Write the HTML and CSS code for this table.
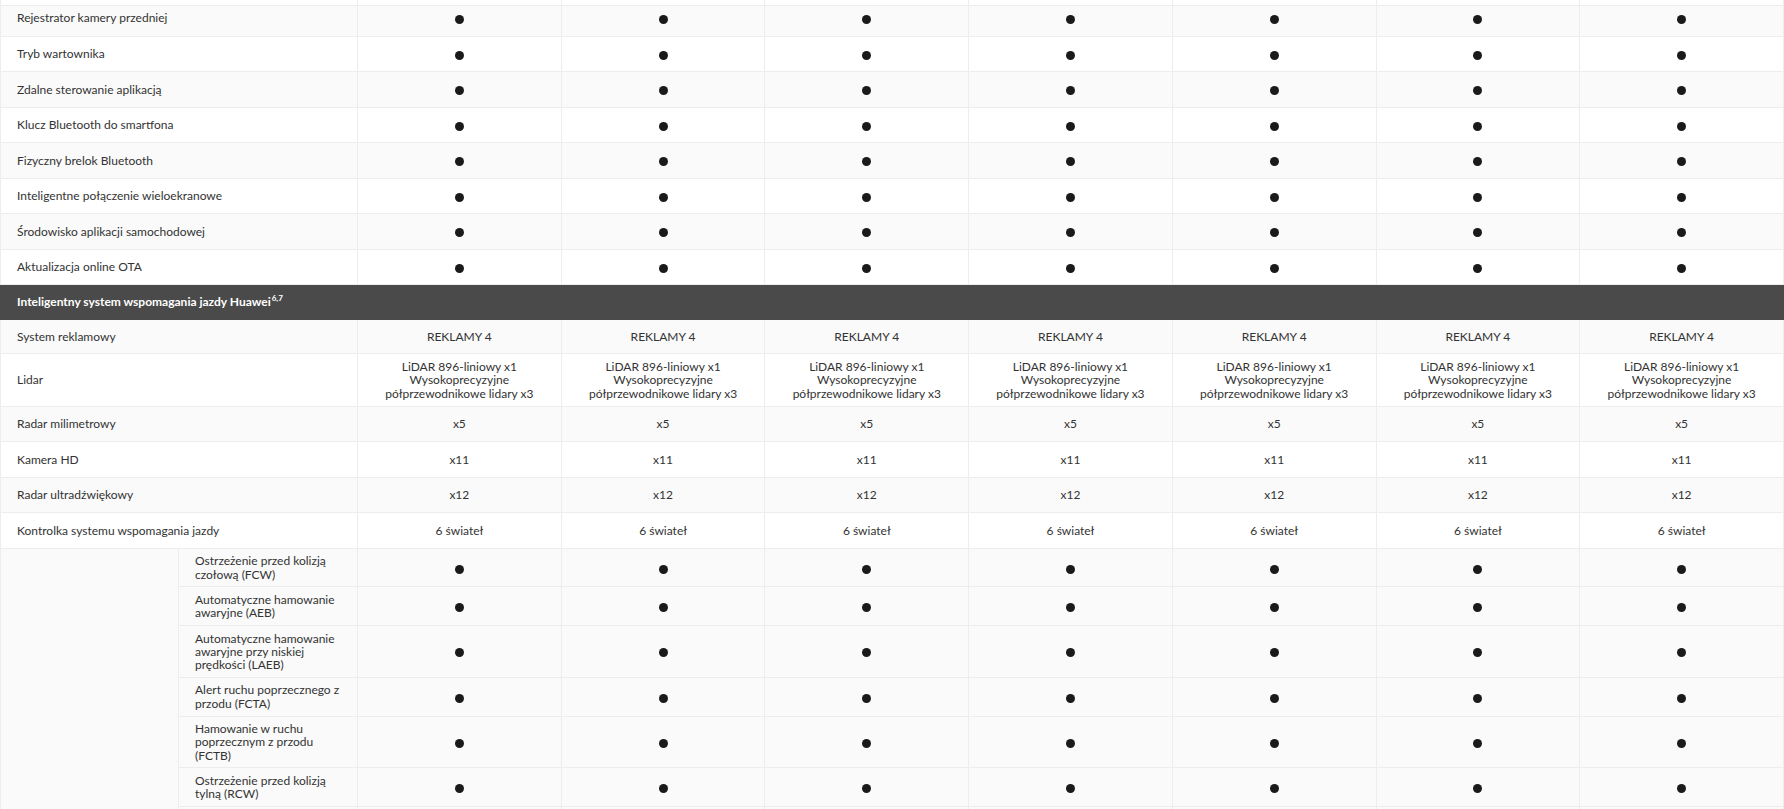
FILE: index.html
```html
<!DOCTYPE html>
<html lang="pl">
<head>
<meta charset="utf-8">
<title>Specyfikacja</title>
<link rel="stylesheet" href="styles.css">
</head>
<body>
<table class="spec">
  <colgroup>
    <col class="c-sub1"><col class="c-sub2">
    <col><col><col><col><col><col><col>
  </colgroup>
  <tbody>
    <tr class="sliver"><td colspan="2"></td><td></td><td></td><td></td><td></td><td></td><td></td><td></td></tr>
    <tr class="gray first"><td class="label" colspan="2">Rejestrator kamery przedniej</td><td><span class="dot"></span></td><td><span class="dot"></span></td><td><span class="dot"></span></td><td><span class="dot"></span></td><td><span class="dot"></span></td><td><span class="dot"></span></td><td><span class="dot"></span></td></tr>
    <tr><td class="label" colspan="2">Tryb wartownika</td><td><span class="dot"></span></td><td><span class="dot"></span></td><td><span class="dot"></span></td><td><span class="dot"></span></td><td><span class="dot"></span></td><td><span class="dot"></span></td><td><span class="dot"></span></td></tr>
    <tr class="gray"><td class="label" colspan="2">Zdalne sterowanie aplikacją</td><td><span class="dot"></span></td><td><span class="dot"></span></td><td><span class="dot"></span></td><td><span class="dot"></span></td><td><span class="dot"></span></td><td><span class="dot"></span></td><td><span class="dot"></span></td></tr>
    <tr><td class="label" colspan="2">Klucz Bluetooth do smartfona</td><td><span class="dot"></span></td><td><span class="dot"></span></td><td><span class="dot"></span></td><td><span class="dot"></span></td><td><span class="dot"></span></td><td><span class="dot"></span></td><td><span class="dot"></span></td></tr>
    <tr class="gray"><td class="label" colspan="2">Fizyczny brelok Bluetooth</td><td><span class="dot"></span></td><td><span class="dot"></span></td><td><span class="dot"></span></td><td><span class="dot"></span></td><td><span class="dot"></span></td><td><span class="dot"></span></td><td><span class="dot"></span></td></tr>
    <tr><td class="label" colspan="2">Inteligentne połączenie wieloekranowe</td><td><span class="dot"></span></td><td><span class="dot"></span></td><td><span class="dot"></span></td><td><span class="dot"></span></td><td><span class="dot"></span></td><td><span class="dot"></span></td><td><span class="dot"></span></td></tr>
    <tr class="gray"><td class="label" colspan="2">Środowisko aplikacji samochodowej</td><td><span class="dot"></span></td><td><span class="dot"></span></td><td><span class="dot"></span></td><td><span class="dot"></span></td><td><span class="dot"></span></td><td><span class="dot"></span></td><td><span class="dot"></span></td></tr>
    <tr><td class="label" colspan="2">Aktualizacja online OTA</td><td><span class="dot"></span></td><td><span class="dot"></span></td><td><span class="dot"></span></td><td><span class="dot"></span></td><td><span class="dot"></span></td><td><span class="dot"></span></td><td><span class="dot"></span></td></tr>
    <tr class="section"><td colspan="9">Inteligentny system wspomagania jazdy Huawei<sup>6,7</sup></td></tr>
    <tr class="gray short"><td class="label" colspan="2">System reklamowy</td><td class="upper">REKLAMY 4</td><td class="upper">REKLAMY 4</td><td class="upper">REKLAMY 4</td><td class="upper">REKLAMY 4</td><td class="upper">REKLAMY 4</td><td class="upper">REKLAMY 4</td><td class="upper">REKLAMY 4</td></tr>
    <tr><td class="label" colspan="2">Lidar</td>
      <td>LiDAR 896-liniowy x1<br>Wysokoprecyzyjne<br>półprzewodnikowe lidary x3</td>
      <td>LiDAR 896-liniowy x1<br>Wysokoprecyzyjne<br>półprzewodnikowe lidary x3</td>
      <td>LiDAR 896-liniowy x1<br>Wysokoprecyzyjne<br>półprzewodnikowe lidary x3</td>
      <td>LiDAR 896-liniowy x1<br>Wysokoprecyzyjne<br>półprzewodnikowe lidary x3</td>
      <td>LiDAR 896-liniowy x1<br>Wysokoprecyzyjne<br>półprzewodnikowe lidary x3</td>
      <td>LiDAR 896-liniowy x1<br>Wysokoprecyzyjne<br>półprzewodnikowe lidary x3</td>
      <td>LiDAR 896-liniowy x1<br>Wysokoprecyzyjne<br>półprzewodnikowe lidary x3</td></tr>
    <tr class="gray"><td class="label" colspan="2">Radar milimetrowy</td><td>x5</td><td>x5</td><td>x5</td><td>x5</td><td>x5</td><td>x5</td><td>x5</td></tr>
    <tr><td class="label" colspan="2">Kamera HD</td><td>x11</td><td>x11</td><td>x11</td><td>x11</td><td>x11</td><td>x11</td><td>x11</td></tr>
    <tr class="gray"><td class="label" colspan="2">Radar ultradźwiękowy</td><td>x12</td><td>x12</td><td>x12</td><td>x12</td><td>x12</td><td>x12</td><td>x12</td></tr>
    <tr><td class="label" colspan="2">Kontrolka systemu wspomagania jazdy</td><td>6 świateł</td><td>6 świateł</td><td>6 świateł</td><td>6 świateł</td><td>6 świateł</td><td>6 świateł</td><td>6 świateł</td></tr>
    <tr class="gray sub"><td class="group" rowspan="7"></td><td class="label">Ostrzeżenie przed kolizją czołową (FCW)</td><td><span class="dot"></span></td><td><span class="dot"></span></td><td><span class="dot"></span></td><td><span class="dot"></span></td><td><span class="dot"></span></td><td><span class="dot"></span></td><td><span class="dot"></span></td></tr>
    <tr class="gray sub"><td class="label">Automatyczne hamowanie awaryjne (AEB)</td><td><span class="dot"></span></td><td><span class="dot"></span></td><td><span class="dot"></span></td><td><span class="dot"></span></td><td><span class="dot"></span></td><td><span class="dot"></span></td><td><span class="dot"></span></td></tr>
    <tr class="gray sub"><td class="label">Automatyczne hamowanie awaryjne przy niskiej prędkości (LAEB)</td><td><span class="dot"></span></td><td><span class="dot"></span></td><td><span class="dot"></span></td><td><span class="dot"></span></td><td><span class="dot"></span></td><td><span class="dot"></span></td><td><span class="dot"></span></td></tr>
    <tr class="gray sub"><td class="label">Alert ruchu poprzecznego z przodu (FCTA)</td><td><span class="dot"></span></td><td><span class="dot"></span></td><td><span class="dot"></span></td><td><span class="dot"></span></td><td><span class="dot"></span></td><td><span class="dot"></span></td><td><span class="dot"></span></td></tr>
    <tr class="gray sub"><td class="label">Hamowanie w ruchu poprzecznym z przodu (FCTB)</td><td><span class="dot"></span></td><td><span class="dot"></span></td><td><span class="dot"></span></td><td><span class="dot"></span></td><td><span class="dot"></span></td><td><span class="dot"></span></td><td><span class="dot"></span></td></tr>
    <tr class="gray sub"><td class="label">Ostrzeżenie przed kolizją tylną (RCW)</td><td><span class="dot"></span></td><td><span class="dot"></span></td><td><span class="dot"></span></td><td><span class="dot"></span></td><td><span class="dot"></span></td><td><span class="dot"></span></td><td><span class="dot"></span></td></tr>
    <tr class="gray sub tail"><td class="label"></td><td></td><td></td><td></td><td></td><td></td><td></td><td></td></tr>
  </tbody>
</table>
</body>
</html>
```
FILE: styles.css
```css
html, body {
  margin: 0;
  padding: 0;
  background: #ffffff;
}

body {
  font-family: Lato, "Noto Sans", sans-serif;
  font-size: 12px;
  color: #333333;
  overflow: hidden;
}

.spec {
  width: 1784px;
  border-collapse: collapse;
  table-layout: fixed;
}

.c-sub1 { width: 178px; }
.c-sub2 { width: 179px; }

.spec td {
  border: 1px solid #ededed;
  border-top: none;
  padding: 6px 16px;
  line-height: 13.3px;
  text-align: center;
  vertical-align: middle;
  background: #ffffff;
}

.spec tr { height: 35.5px; }
.spec tr.short { height: 34px; }

.spec tr.gray td { background: #fafafa; }

.spec td.label { text-align: left; }

.spec tr.sliver { height: 5px; }
.spec tr.sliver td { padding: 0; height: 4px; }

.spec tr.first { height: 31px; }
.spec tr.first td { padding-top: 2px; padding-bottom: 7px; }

.spec tr.section { height: 35px; }
.spec tr.section td {
  background: #4a4a4a;
  color: #ffffff;
  font-weight: 700;
  text-align: left;
  border-color: #4a4a4a;
  height: 34px;
  padding: 0 16px;
}

.spec tr.section sup {
  font-size: 8px;
  line-height: 0;
  vertical-align: 5px;
  margin-left: 1px;
}

.spec tr.sub { height: auto; }
.spec tr.sub td {
  padding-top: 5.5px;
  padding-bottom: 5.5px;
}
.spec tr.sub td.label {
  padding-left: 16px;
  padding-right: 10px;
}

.spec tr.tail { height: 38px; }

.spec td.group { background: #fafafa; }

.dot {
  display: inline-block;
  width: 9px;
  height: 9px;
  border-radius: 50%;
  background: #1a1a1a;
  vertical-align: middle;
}
```
